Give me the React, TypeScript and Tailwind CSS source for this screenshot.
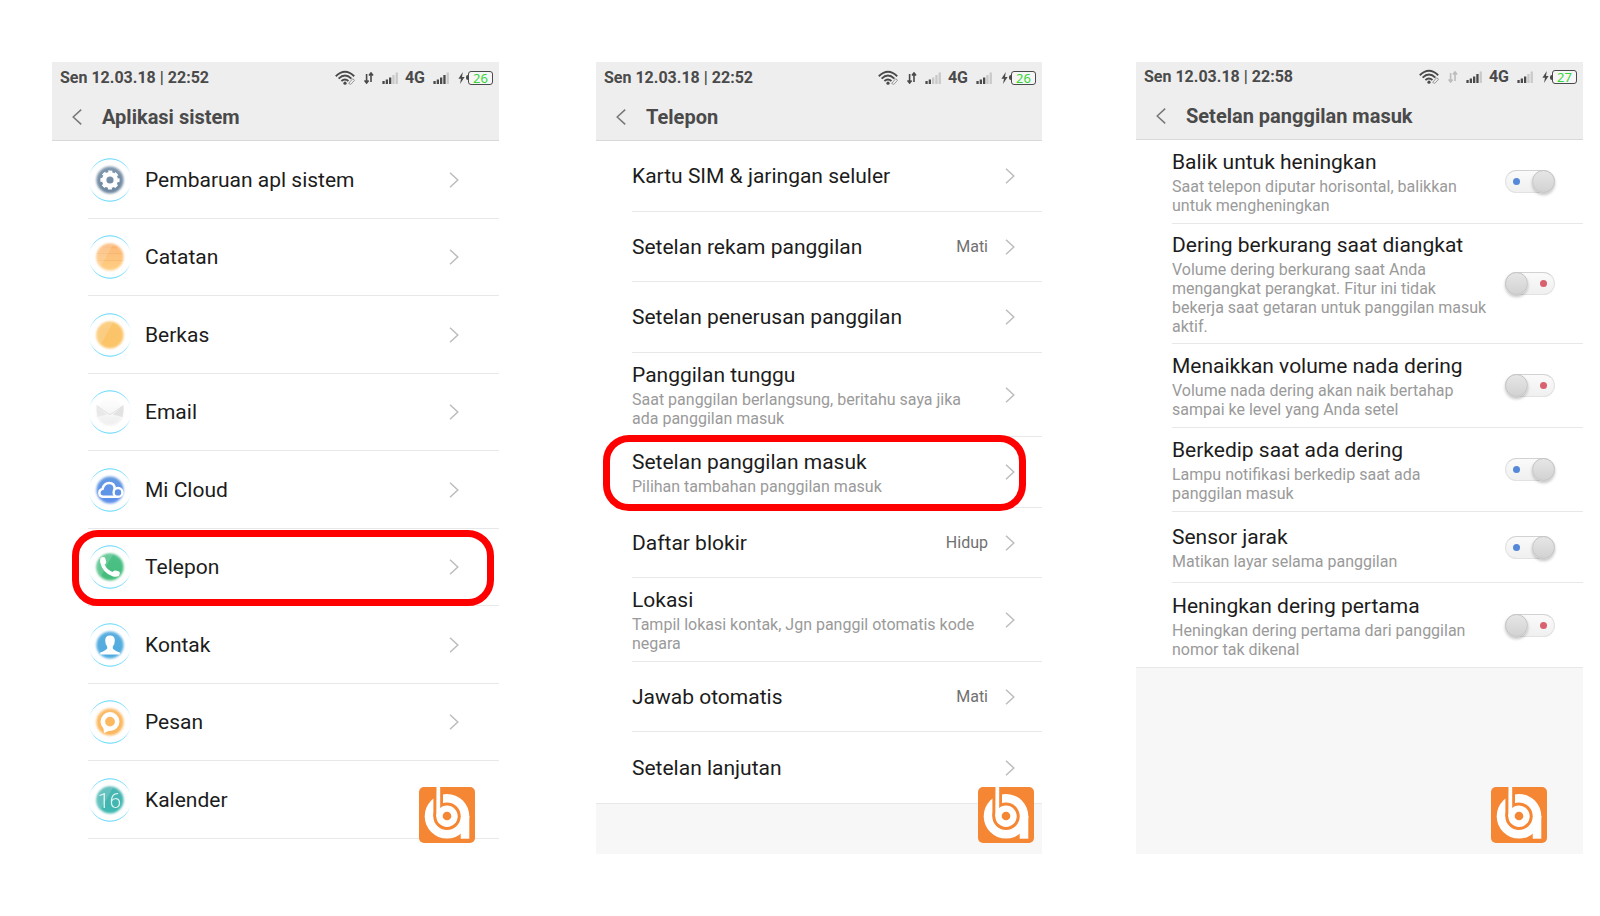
import type { ReactNode } from 'react';
import { clsx } from 'clsx';

interface StatusBarProps {
  time: string;
  battery: number;
  simOne: number;
  simTwo: number;
  idle?: boolean;
  className?: string;
}

interface PhoneProps extends StatusBarProps {
  title: string;
  logoClass: string;
  phoneClass: string;
  children: ReactNode;
}

interface RowProps {
  title: string;
  note?: string;
  tall?: boolean;
  value?: string;
}

const apps: { name: string; glyph: ReactNode }[] = [
  { name: 'Pembaruan apl sistem', glyph: <GearGlyph /> },
  { name: 'Catatan', glyph: <NotesGlyph /> },
  { name: 'Berkas', glyph: <FilesGlyph /> },
  { name: 'Email', glyph: <MailGlyph /> },
  { name: 'Mi Cloud', glyph: <CloudGlyph /> },
  { name: 'Telepon', glyph: <PhoneGlyph /> },
  { name: 'Kontak', glyph: <ContactGlyph /> },
  { name: 'Pesan', glyph: <MessageGlyph /> },
  { name: 'Kalender', glyph: <CalendarGlyph /> },
];

const callSettings: RowProps[] = [
  { title: 'Kartu SIM & jaringan seluler' },
  { title: 'Setelan rekam panggilan', value: 'Mati' },
  { title: 'Setelan penerusan panggilan' },
  { title: 'Panggilan tunggu', note: 'Saat panggilan berlangsung, beritahu saya jika ada panggilan masuk', tall: true },
  { title: 'Setelan panggilan masuk', note: 'Pilihan tambahan panggilan masuk' },
  { title: 'Daftar blokir', value: 'Hidup' },
  { title: 'Lokasi', note: 'Tampil lokasi kontak, Jgn panggil otomatis kode negara', tall: true },
  { title: 'Jawab otomatis', value: 'Mati' },
  { title: 'Setelan lanjutan' },
];

const incomingSettings: (RowProps & { id: string; on: boolean })[] = [
  { id: 'flip', title: 'Balik untuk heningkan', note: 'Saat telepon diputar horisontal, balikkan untuk mengheningkan', tall: true, on: true },
  { id: 'pickup', title: 'Dering berkurang saat diangkat', note: 'Volume dering berkurang saat Anda mengangkat perangkat. Fitur ini tidak bekerja saat getaran untuk panggilan masuk aktif.', tall: true, on: false },
  { id: 'rising', title: 'Menaikkan volume nada dering', note: 'Volume nada dering akan naik bertahap sampai ke level yang Anda setel', tall: true, on: false },
  { id: 'flash', title: 'Berkedip saat ada dering', note: 'Lampu notifikasi berkedip saat ada panggilan masuk', tall: true, on: true },
  { id: 'sensor', title: 'Sensor jarak', note: 'Matikan layar selama panggilan', on: true },
  { id: 'first', title: 'Heningkan dering pertama', note: 'Heningkan dering pertama dari panggilan nomor tak dikenal', tall: true, on: false },
];

function Disc({ from, to, children }: { from: string; to: string; children?: ReactNode }) {
  const id = `disc-${from.slice(1)}`;
  return (
    <svg viewBox="0 0 44 44" className="size-11 shrink-0" aria-hidden="true">
      <defs>
        <linearGradient id={id} x1="0" y1="0" x2="0" y2="1">
          <stop offset="0" stopColor={from} />
          <stop offset="1" stopColor={to} />
        </linearGradient>
        <linearGradient id={`${id}-ring`} x1="0" y1="0" x2="0" y2="1">
          <stop offset="0" stopColor="#5ad6ff" />
          <stop offset="0.15" stopColor="#8fe3ff" />
          <stop offset="0.36" stopColor="#e8f9ff" stopOpacity="0.3" />
          <stop offset="0.64" stopColor="#e8f9ff" stopOpacity="0.3" />
          <stop offset="0.85" stopColor="#8fe3ff" />
          <stop offset="1" stopColor="#5ad6ff" />
        </linearGradient>
        <filter id={`${id}-soft`} x="-20%" y="-20%" width="140%" height="140%">
          <feGaussianBlur stdDeviation="1" />
        </filter>
      </defs>
      <circle cx="22" cy="22" r="21.2" fill="none" stroke={`url(#${id}-ring)`} strokeWidth="1" />
      <circle cx="22" cy="22" r="13.6" fill={`url(#${id})`} filter={`url(#${id}-soft)`} />
      {children}
    </svg>
  );
}

function Shine() {
  return <path d="M17 10.5L25 9.5L13 31L9.5 26Q8 15 17 10.5Z" fill="#fff" opacity="0.16" />;
}

function GearGlyph() {
  return (
    <Disc from="#7e97ad" to="#6d87a0">
      <g fill="none" stroke="#fff">
        <circle cx="22" cy="22" r="5.8" strokeWidth="4.4" />
        <circle cx="22" cy="22" r="8.4" strokeWidth="2.4" strokeDasharray="3.9 2.697" strokeDashoffset="1.95" />
      </g>
    </Disc>
  );
}

function NotesGlyph() {
  return (
    <Disc from="#fbb877" to="#ffcf82">
      <path d="M14.5 12.2H29.5M9.5 18.5H34.5M9.5 25.5H34.5" stroke="#f0a060" strokeWidth="0.8" opacity="0.4" />
      <Shine />
    </Disc>
  );
}

function FilesGlyph() {
  return (
    <Disc from="#fbc56c" to="#fbc468">
      <Shine />
    </Disc>
  );
}

function MailGlyph() {
  return (
    <Disc from="#fefefe" to="#efefef">
      <path d="M8.5 16L19 24.5L9.5 27Q8 21 8.5 16Z" fill="#e9e9e9" />
      <path d="M35.5 15.5L25 24.5L34.5 27Q36 21 35.5 15.5Z" fill="#e2e2e2" />
      <path d="M8.5 15.5L20.5 23.8Q22 24.8 23.5 23.8L35.5 15.5" fill="none" stroke="#d6d6d6" strokeWidth="0.7" />
    </Disc>
  );
}

function CloudGlyph() {
  return (
    <Disc from="#649ae0" to="#5f90ea">
      <g fill="none" stroke="#fff" strokeWidth="2.4">
        <path d="M30 28.8H14.8A4 4 0 0 1 14.6 20.9Q16 15 21.2 15Q26.6 15 26.6 20.6V24.4" />
        <circle cx="30" cy="24.4" r="4.4" fill="#5f93e4" />
      </g>
    </Disc>
  );
}

function PhoneGlyph() {
  return (
    <Disc from="#4fc188" to="#43bd7b">
      <Shine />
      <path
        d="M12.4 13.6Q13 12 14.8 12L17 12.4Q18.2 16 18.2 17.4Q18.2 18.6 16.6 19.6Q18.6 24.6 24.4 27Q25.6 25.4 26.8 25.4Q28.4 25.4 31.6 26.8Q32.4 29.8 30.8 31Q28.4 32.4 25 31.4Q14.6 28.4 12.2 17.6Q11.8 15.2 12.4 13.6Z"
        fill="#fff"
      />
    </Disc>
  );
}

function ContactGlyph() {
  return (
    <Disc from="#5aaee0" to="#4fabdf">
      <path
        d="M22 12.4Q26.8 12.4 26.8 17.4Q26.8 21.6 24.8 23.4V25.4Q25.4 26.8 31.8 29.6V31.4H12.2V29.6Q18.6 26.8 19.2 25.4V23.4Q17.2 21.6 17.2 17.4Q17.2 12.4 22 12.4Z"
        fill="#fff"
      />
    </Disc>
  );
}

function MessageGlyph() {
  return (
    <Disc from="#fbbb68" to="#fcb75c">
      <path d="M15.4 27L16 33L22 30.4Z" fill="#fff" />
      <circle cx="22" cy="21.6" r="7.2" fill="none" stroke="#fff" strokeWidth="4.6" />
    </Disc>
  );
}

function CalendarGlyph() {
  return (
    <Disc from="#49b5b2" to="#3fb8b0">
      <Shine />
      <text x="21.5" y="30" textAnchor="middle" className="font-[Roboto,sans-serif] text-[21px] font-light" fill="#fff" opacity="0.85">
        16
      </text>
    </Disc>
  );
}

function Chevron() {
  return (
    <svg viewBox="0 0 10 16" className="h-4 w-2.5 shrink-0" fill="none" stroke="#bdbdbd" strokeWidth="1.5" aria-hidden="true">
      <path d="M1 0.8L8.8 8L1 15.2" />
    </svg>
  );
}

function Logo({ className }: { className: string }) {
  return (
    <svg viewBox="0 0 56 56" className={clsx('absolute bottom-[11px] size-14', className)} role="img" aria-label="Logo">
      <rect width="56" height="56" rx="5" fill="#f58634" />
      <circle cx="28" cy="29.3" r="22.3" fill="#fff" />
      <path d="M41.7 29H50.3V51.7H41.7Z" fill="#fff" />
      <circle cx="28" cy="29.3" r="13.7" fill="#f58634" />
      <path d="M14.4 4H24V29H14.4Z" fill="#f58634" />
      <circle cx="28" cy="29.3" r="10.7" fill="#fff" />
      <path d="M17.5 0H21.2V29.3H17.3Z" fill="#fff" />
      <circle cx="28" cy="29" r="4.3" fill="#f58634" />
    </svg>
  );
}

function Signal({ level }: { level: number }) {
  return (
    <svg viewBox="0 0 17 12" className="h-3 w-[17px]" fill="#4a4a4a" aria-hidden="true">
      {[3, 4.5, 6.5, 9, 11.5].map((h, i) => (
        <rect key={h} x={0.4 + i * 3.3} y={12 - h} width="2.3" height={h} opacity={i < level ? 1 : 0.22} />
      ))}
    </svg>
  );
}

function StatusBar({ time, battery, simOne, simTwo, idle, className }: StatusBarProps) {
  return (
    <div className={clsx('flex items-center pr-1.5 pl-2 text-base leading-5 font-bold', className)}>
      <span className="flex-1">{time}</span>
      <svg viewBox="0 0 21 16" className="mr-2 h-4 w-[21px]" fill="none" stroke="#4a4a4a" strokeWidth="1.9" aria-hidden="true">
        <path d="M0.8 6.2Q10 -2.6 19.2 6.2M3.6 8.6Q10 2.6 16.4 8.6M6.4 11Q10 7.8 13.4 11" />
        <circle cx="10" cy="13.2" r="1.6" fill="#4a4a4a" stroke="none" />
        <path d="M13.6 13.4L17.6 8.8L19.6 10.2L15.8 14.4Z" fill="#eee" stroke="#9a9a9a" strokeWidth="1" />
      </svg>
      <svg
        viewBox="0 0 10 12"
        className={clsx('mr-2 h-3 w-2.5', idle && 'opacity-30')}
        fill="none"
        stroke="#4a4a4a"
        strokeWidth="1.6"
        aria-hidden="true"
      >
        <path d="M2.6 2V10.6M0.6 8.4L2.6 11L4.6 8.4M7 10V1.4M5 3.6L7 1L9 3.6" />
      </svg>
      <Signal level={simOne} />
      <span className="mx-1.5">4G</span>
      <span className="ml-0.5">
        <Signal level={simTwo} />
      </span>
      <svg viewBox="0 0 8 14" className="ml-2 h-3.5 w-2" fill="#4a4a4a" aria-hidden="true">
        <path d="M4.8 1L0.4 7.8H3L2 13L6.6 6H4Z" />
      </svg>
      <span className="h-[5px] w-0.5 rounded-l-sm bg-[#4a4a4a]" />
      <span className="flex h-[14px] w-[25px] items-center justify-center rounded-[3px] border border-[#4a4a4a] bg-[#f6f6f6] font-['Noto_Sans',sans-serif] text-[13px] leading-3 font-normal text-[#3ad53a]">
        {battery}
      </span>
    </div>
  );
}

function Phone({ title, logoClass, phoneClass, children, ...status }: PhoneProps) {
  return (
    <section className={clsx('relative flex min-w-0 flex-col bg-[#f7f7f7]', phoneClass)}>
      <header className="border-b border-[#d9d9d9] bg-[#eee] text-[#4a4a4a]">
        <StatusBar {...status} />
        <div className="flex h-[47px] items-center gap-5 pl-5">
          <button type="button" aria-label="Kembali">
            <svg viewBox="0 0 10 16" className="h-4 w-2.5" fill="none" stroke="#777" strokeWidth="1.5" aria-hidden="true">
              <path d="M9.2 0.6L1.2 8L9.2 15.4" />
            </svg>
          </button>
          <h2 className="text-xl leading-7 font-bold">{title}</h2>
        </div>
      </header>
      {children}
      <Logo className={logoClass} />
    </section>
  );
}

function RowText({ title, note }: RowProps) {
  return (
    <span className={clsx('block min-w-0 flex-1', note && 'py-[7px]')}>
      <span className="block text-[21px] leading-7 text-[#1c1c1c]">{title}</span>
      {note && <span className="mt-px block text-base leading-[19px] text-[#9a9a9a]">{note}</span>}
    </span>
  );
}

export default function App() {
  return (
    <main className="flex min-h-[854px] bg-white pt-[62px] pr-[17px] pl-[52px] font-[Roboto,sans-serif]">
      <Phone
        title="Aplikasi sistem"
        time="Sen 12.03.18 | 22:52"
        battery={26}
        simOne={3}
        simTwo={4}
        className="h-[31px]"
        phoneClass="mr-[97px] flex-[447_1_0%]"
        logoClass="right-6"
      >
        <ul className="grow bg-white pl-9">
          {apps.map(({ name, glyph }) => (
            <li key={name} className="relative flex border-b border-[#e8e8e8] odd:min-h-[78px] even:min-h-[77px]">
              <a href="#" className="flex flex-1 items-center gap-[13px] pr-10">
                {glyph}
                <RowText title={name} />
                {name !== 'Kalender' && <Chevron />}
              </a>
              {name === 'Telepon' && (
                <span className="pointer-events-none absolute top-px right-[5px] -bottom-px -left-4 z-10 rounded-[26px] border-[7px] border-[#f00]" />
              )}
            </li>
          ))}
        </ul>
      </Phone>

      <Phone
        title="Telepon"
        time="Sen 12.03.18 | 22:52"
        battery={26}
        simOne={2}
        simTwo={3}
        className="h-[31px]"
        phoneClass="mr-[94px] flex-[446_1_0%]"
        logoClass="right-2"
      >
        <ul className="border-b border-[#e8e8e8] bg-white pl-9">
          {callSettings.map(({ title, note, tall, value }) => (
            <li
              key={title}
              className={clsx(
                'relative flex border-b border-[#e8e8e8] last:min-h-[70px] last:border-b-0',
                tall ? 'min-h-[84px]' : 'odd:min-h-[71px] even:min-h-[70px]',
              )}
            >
              <a href="#" className="flex flex-1 items-center gap-[17px] pr-[27px]">
                <RowText title={title} note={note} />
                {value && <span className="text-base leading-5 text-[#707070]">{value}</span>}
                <Chevron />
              </a>
              {title === 'Setelan panggilan masuk' && (
                <span className="pointer-events-none absolute -top-0.5 right-4 -bottom-1 -left-[29px] z-10 rounded-[26px] border-[7px] border-[#f00]" />
              )}
            </li>
          ))}
        </ul>
      </Phone>

      <Phone
        title="Setelan panggilan masuk"
        time="Sen 12.03.18 | 22:58"
        battery={27}
        simOne={4}
        simTwo={3}
        idle
        className="h-[30px]"
        phoneClass="flex-[447_1_0%]"
        logoClass="right-9"
      >
        <ul className="border-b border-[#e8e8e8] bg-white pl-9">
          {incomingSettings.map(({ id, title, note, tall, on }) => (
            <li key={id} className={clsx('flex border-b border-[#e8e8e8] last:border-b-0', tall ? 'min-h-[84px]' : 'min-h-[71px]')}>
              <label htmlFor={id} className="flex flex-1 items-center gap-4 pr-7">
                <RowText title={title} note={note} />
                <input
                  id={id}
                  type="checkbox"
                  role="switch"
                  defaultChecked={on}
                  className="relative h-[23px] w-[50px] shrink-0 appearance-none rounded-full border border-[#e2e2e2] border-t-[#d2d2d2] bg-linear-to-b from-[#fafafa] to-[#f0f0f0] before:absolute before:-top-px before:-left-px before:size-[23px] before:rounded-full before:border before:border-[#c4c4c4] before:bg-linear-to-b before:from-[#e6e6e6] before:to-[#d2d2d2] before:shadow-[0_2px_3px_rgba(0,0,0,0.22)] after:absolute after:top-[7px] after:right-[7px] after:size-[7px] after:rounded-full after:bg-[#d9606e] checked:before:right-[-1px] checked:before:left-auto checked:after:right-auto checked:after:left-[7px] checked:after:bg-[#5588d8]"
                />
              </label>
            </li>
          ))}
        </ul>
      </Phone>
    </main>
  );
}
